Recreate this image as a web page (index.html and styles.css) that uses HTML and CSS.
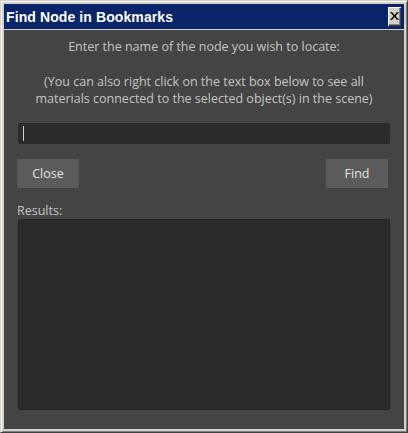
FILE: index.html
```html
<!DOCTYPE html>
<html>
<head>
<meta charset="utf-8">
<link rel="stylesheet" href="styles.css">
</head>
<body>
<div class="window">
  <div class="titlebar">
    <span class="title">Find Node in Bookmarks</span>
    <button class="close-x" aria-label="Close">
      <svg width="9" height="8" viewBox="0 0 9 8"><path d="M0 0h2l2.5 3 2.5-3h2L5.5 4 9 8H7L4.5 5 2 8H0l3.5-4z" fill="#000"/></svg>
    </button>
  </div>
  <div class="content">
    <p class="prompt">Enter the name of the node you wish to locate:</p>
    <p class="hint">(You can also right click on the text box below to see all<br>materials connected to the selected object(s) in the scene)</p>
    <div class="input"><span class="caret"></span></div>
    <div class="buttons">
      <button class="btn">Close</button>
      <button class="btn">Find</button>
    </div>
    <div class="label">Results:</div>
    <div class="results"></div>
  </div>
</div>
</body>
</html>
```
FILE: styles.css
```css
html, body { margin: 0; padding: 0; background: #d4d0c8; }
.window {
  width: 408px;
  height: 433px;
  box-sizing: border-box;
  border-style: solid;
  border-width: 1px;
  border-color: #d4d0c8 #404040 #404040 #d4d0c8;
  box-shadow: inset 1px 1px 0 #ffffff, inset -1px -1px 0 #808080;
  padding: 3px;
  background: #d4d0c8;
  display: flex;
  flex-direction: column;
}
.titlebar {
  height: 25px;
  background: #0a246a;
  display: flex;
  align-items: center;
  justify-content: space-between;
  padding: 0 2px;
  flex: none;
}
.title {
  font-family: "Liberation Sans", Arial, sans-serif;
  font-weight: bold;
  font-size: 14px;
  color: #ffffff;
  letter-spacing: 0.1px;
  margin-top: 1px;
}
.close-x {
  width: 13px;
  height: 19px;
  margin: 0 1px 0 0;
  padding: 0;
  background: #d4d0c8;
  border: none;
  box-shadow: inset 1px 1px 0 #ffffff, inset -1px -1px 0 #404040, inset -2px -2px 0 #808080;
  display: flex;
  align-items: center;
  justify-content: center;
}
.close-x svg { display: block; margin-top: -1px; }
.content {
  flex: 1;
  background: #444444;
  margin-top: 1px;
  padding: 8px 14px 19px 14px;
  display: flex;
  flex-direction: column;
  font-family: "Open Sans", "Noto Sans", sans-serif;
  font-size: 12.5px;
  color: #c4c4c4;
}
.prompt, .hint {
  margin: 0;
  text-align: center;
  line-height: 17px;
}
.hint { margin-top: 18px; }
.input {
  margin-top: 16px;
  height: 21px;
  background: #2b2b2b;
  border-radius: 2px;
  display: flex;
  align-items: center;
  padding-left: 5px;
}
.caret {
  width: 1px;
  height: 15px;
  background: #d0d0d0;
}
.buttons {
  display: flex;
  justify-content: space-between;
  margin: 15px 2px 0 -1px;
}
.btn {
  width: 62px;
  height: 29px;
  background: #5b5b5b;
  border: none;
  padding: 0;
  font-family: "Open Sans", "Noto Sans", sans-serif;
  font-size: 12.5px;
  color: #e4e4e4;
}
.label {
  margin-top: 15px;
  margin-left: -1px;
  line-height: 16px;
}
.results {
  flex: 1;
  background: #2b2b2b;
  border: 1px solid #262626;
  border-bottom-color: #202020;
  border-radius: 2px;
}
```
